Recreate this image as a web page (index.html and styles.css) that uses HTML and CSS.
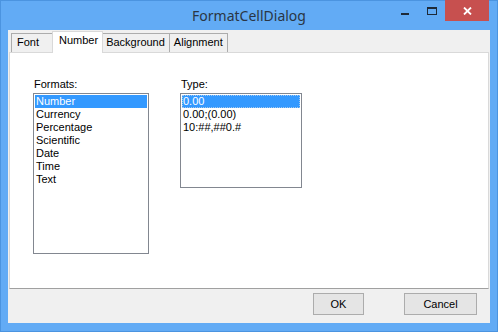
FILE: index.html
```html
<!DOCTYPE html>
<html lang="en">
<head>
    <meta charset="UTF-8">
    <title>FormatCellDialog</title>
    <link rel="stylesheet" href="styles.css">
</head>
<body>
    <div class="window">
        <div class="titlebar">
            <div></div>
            <div class="title">FormatCellDialog</div>
            <div class="controls">
                <div class="ctl">
                    <svg width="8" height="3" viewBox="0 0 8 3"><rect x="0" y="0" width="8" height="2" fill="#1e2a38"/></svg>
                </div>
                <div class="ctl">
                    <svg width="10" height="8" viewBox="0 0 10 8"><rect x="0.5" y="0.5" width="9" height="7" fill="none" stroke="#1e2a38"/><rect x="0" y="0" width="10" height="2" fill="#1e2a38"/></svg>
                </div>
                <div class="ctl close">
                    <svg width="9" height="8" viewBox="0 0 9 8"><path d="M1 0.5 L8 7.5 M8 0.5 L1 7.5" stroke="#fff" stroke-width="1.8"/></svg>
                </div>
            </div>
        </div>

        <div class="client">
            <div class="tabs">
                <div class="tab-strip">
                    <div class="tab first">Font</div>
                    <div class="tab active">Number</div>
                    <div class="tab">Background</div>
                    <div class="tab">Alignment</div>
                </div>
                <div class="tab-page">
                    <div class="field">
                        <div class="label">Formats:</div>
                        <div class="listbox formats">
                            <div class="item selected">Number</div>
                            <div class="item">Currency</div>
                            <div class="item">Percentage</div>
                            <div class="item">Scientific</div>
                            <div class="item">Date</div>
                            <div class="item">Time</div>
                            <div class="item">Text</div>
                        </div>
                    </div>
                    <div class="field">
                        <div class="label">Type:</div>
                        <div class="listbox types">
                            <div class="item selected focus">0.00</div>
                            <div class="item">0.00;(0.00)</div>
                            <div class="item">10:##,##0.#</div>
                        </div>
                    </div>
                </div>
            </div>
            <div class="buttons">
                <button class="btn ok">OK</button>
                <button class="btn cancel">Cancel</button>
            </div>
        </div>
    </div>
</body>
</html>
```

FILE: styles.css
```css
body {
    margin: 0;
    font-family: 'Liberation Sans', Arial, sans-serif;
    font-size: 11px;
    color: #000;
}
.window {
    width: 498px;
    height: 332px;
    box-sizing: border-box;
    background-color: #62abf5;
    box-shadow: inset 0 0 0 1px #4b94e0;
    padding-bottom: 9px;
}
.titlebar {
    height: 30px;
    display: grid;
    grid-template-columns: 1fr auto 1fr;
}
.title {
    font-family: 'Noto Sans', sans-serif;
    font-size: 14px;
    color: #2a3644;
    line-height: 30px;
    padding-top: 1px;
}
.controls {
    display: flex;
    justify-content: flex-end;
    align-items: flex-start;
    padding-right: 9px;
}
.ctl {
    width: 27px;
    height: 21px;
    display: flex;
    align-items: center;
    justify-content: center;
}
.ctl svg {
    display: block;
}
.ctl:first-child svg {
    margin-top: 7px;
}
.ctl.close {
    width: 44px;
    background-color: #c7504f;
}
.client {
    margin: 0 8px;
    height: 293px;
    background-color: #f0f0f0;
    display: flex;
    flex-direction: column;
}
.tabs {
    margin-left: 1px;
    width: 480px;
}
.tab-strip {
    height: 22px;
    display: flex;
    align-items: flex-end;
    padding-left: 2px;
}
.tab {
    height: 18px;
    line-height: 17px;
    padding: 0 4px;
    border: 1px solid #acacac;
    border-bottom: none;
    background-color: #f0f0f0;
    margin-right: -1px;
}
.tab.first {
    padding: 0 15px 0 5px;
}
.tab.active {
    position: relative;
    height: 21px;
    line-height: 17px;
    background-color: #fff;
    border-color: #d9d9d9;
    margin: 0 -2px -1px -2px;
    padding: 0 4px 0 6px;
    z-index: 1;
}
.tab-page {
    height: 237px;
    box-sizing: border-box;
    border: 1px solid #d9d9d9;
    border-bottom-color: #a0a0a0;
    background-color: #fff;
    display: flex;
    gap: 31px;
    padding: 25px 0 0 23px;
}
.label {
    line-height: 13px;
    padding-left: 1px;
    margin-bottom: 2px;
}
.listbox {
    border: 1px solid #828790;
    background-color: #fff;
    box-sizing: border-box;
    padding: 1px;
}
.listbox.formats {
    width: 116px;
    height: 161px;
}
.listbox.types {
    width: 122px;
    height: 95px;
}
.item {
    height: 13px;
    line-height: 13px;
    padding-left: 1px;
    white-space: nowrap;
}
.item.selected {
    background-color: #3399ff;
    color: #fff;
}
.item.focus {
    outline: 1px dotted #a0c8f0;
    outline-offset: -1px;
}
.buttons {
    flex: 1;
    display: flex;
    justify-content: flex-end;
    align-items: flex-start;
    gap: 40px;
    padding: 4px 13px 0 0;
}
.btn {
    height: 22px;
    border: 1px solid #acacac;
    background-color: #e5e5e5;
    font-family: 'Liberation Sans', Arial, sans-serif;
    font-size: 11px;
    color: #000;
    padding: 0;
}
.btn.ok {
    width: 51px;
}
.btn.cancel {
    width: 73px;
}
```
